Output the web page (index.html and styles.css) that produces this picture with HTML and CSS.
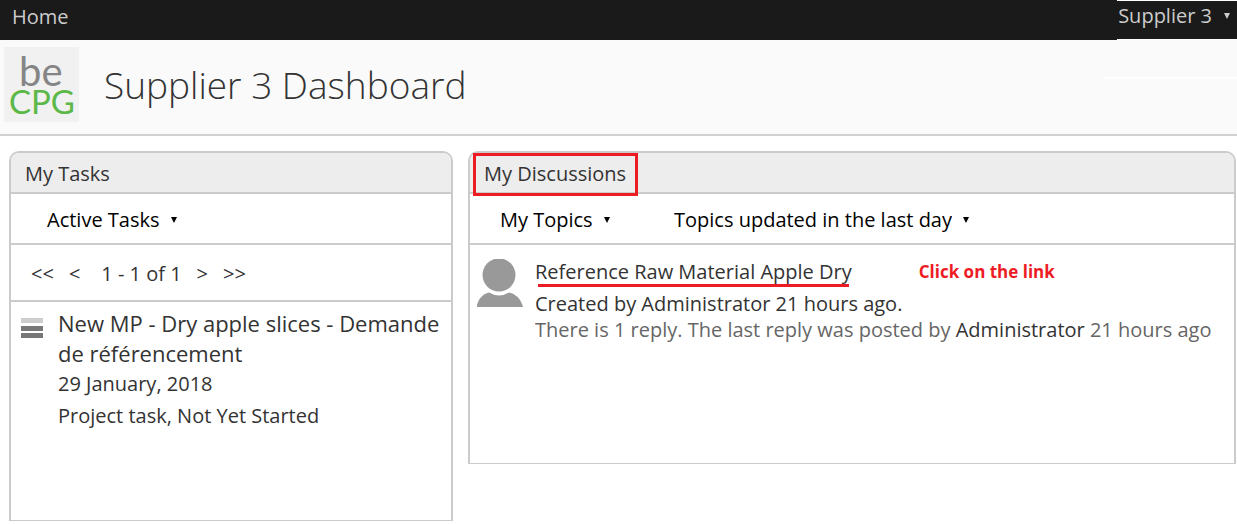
FILE: index.html
```html
<!DOCTYPE html>
<html lang="en">
<head>
    <meta charset="UTF-8">
    <meta name="viewport" content="width=device-width, initial-scale=1.0">
    <title>Supplier 3 Dashboard</title>
    <link rel="stylesheet" href="styles.css">
</head>
<body>
    <nav class="topbar">
        <a class="home" href="#">Home</a>
        <button class="user-menu" type="button" aria-haspopup="true">Supplier 3 <span class="arrow"></span></button>
    </nav>

    <header class="header">
        <svg class="logo" viewBox="0 0 75 75" role="img" aria-label="beCPG">
            <rect width="75" height="75" fill="#f1f1f1"/>
            <text><tspan class="logo-be" x="15" y="39">be</tspan><tspan class="logo-cpg" x="5" y="67">CPG</tspan></text>
        </svg>
        <h1>Supplier 3 Dashboard</h1>
        <div class="header-line"></div>
    </header>

    <main class="dashboard">
        <section class="panel tasks">
            <h2 class="panel-title"><span>My Tasks</span></h2>
            <div class="toolbar">
                <label class="filter">
                    <select aria-label="Task filter">
                        <option>Active Tasks</option>
                    </select>
                    <span class="arrow"></span>
                </label>
            </div>
            <div class="pager">
                <button type="button" aria-label="First page">&lt;&lt;</button>
                <button type="button" aria-label="Previous page">&lt;</button>
                <span class="pages">1 - 1 of 1</span>
                <button type="button" aria-label="Next page">&gt;</button>
                <button type="button" aria-label="Last page">&gt;&gt;</button>
            </div>
            <div class="task">
                <svg class="priority" viewBox="0 0 24 24" aria-hidden="true">
                    <rect x="1" y="1" width="22" height="5" fill="#cdcdcd"/>
                    <rect x="1" y="9" width="22" height="5" fill="#777"/>
                    <rect x="1" y="16" width="22" height="5" fill="#777"/>
                </svg>
                <div class="task-text">
                    <a class="task-name" href="#">New MP - Dry apple slices - Demande de référencement</a>
                    <div class="task-date">29 January, 2018</div>
                    <div class="task-status">Project task, Not Yet Started</div>
                </div>
            </div>
        </section>

        <section class="panel discussions">
            <h2 class="panel-title"><span class="marked">My Discussions</span></h2>
            <div class="toolbar">
                <label class="filter">
                    <select aria-label="Topics">
                        <option>My Topics</option>
                    </select>
                    <span class="arrow"></span>
                </label>
                <label class="filter">
                    <select aria-label="Period">
                        <option>Topics updated in the last day</option>
                    </select>
                    <span class="arrow"></span>
                </label>
            </div>
            <div class="topic">
                <svg class="avatar" viewBox="0 0 46 48" aria-hidden="true">
                    <circle cx="22" cy="16" r="16.500" fill="#999"/>
                    <path d="M0 48v-2C2 39 6 35 12 33.500q10 6 20 0C39 35 44 40 46 48z" fill="#999"/>
                </svg>
                <div class="topic-text">
                    <div class="topic-head">
                        <a class="topic-name" href="#">Reference Raw Material Apple Dry</a>
                        <strong class="note">Click on the link</strong>
                    </div>
                    <div class="created">Created by <a href="#">Administrator</a> 21 hours ago.</div>
                    <div class="replies">There is 1 reply. The last reply was posted by <a href="#">Administrator</a> 21 hours ago</div>
                </div>
            </div>
        </section>
    </main>
</body>
</html>
```
FILE: styles.css
```css
* {
    box-sizing: border-box;
}

body {
    margin: 0;
    background: #fff;
    color: #333;
    font-family: "Open Sans", sans-serif;
    font-size: 20px;
    line-height: 26px;
}

a {
    color: #333;
    text-decoration: none;
}

button,
select {
    margin: 0;
    padding: 0;
    border: 0;
    background: none;
    color: inherit;
    font: inherit;
    appearance: none;
    cursor: pointer;
}

.arrow {
    display: inline-block;
    width: 0;
    border: 3px solid transparent;
    border-top: 6px solid currentColor;
    border-bottom: 0;
}

.topbar {
    display: flex;
    justify-content: space-between;
    height: 40px;
    background: #1a1a1a;
}

.home {
    padding: 4px 12px;
    color: #ccc;
}

.user-menu {
    display: flex;
    align-items: center;
    gap: 12px;
    padding: 0 7px 8px 1px;
    border-top: 1px solid #fff;
    border-bottom: 1px solid #fff;
    color: #ccc;
}

.header {
    display: flex;
    align-items: center;
    height: 96px;
    padding: 0 0 5px 4px;
    border-bottom: 2px solid #d1d1d1;
    background: #fafafa;
}

.logo {
    width: 75px;
    height: 75px;
}

.logo text {
    font-family: Lato, sans-serif;
}

.logo-be {
    fill: #858585;
    font-size: 40px;
}

.logo-cpg {
    fill: #5cb848;
    font-size: 33px;
}

h1 {
    margin: 0 0 0 25px;
    font-size: 37px;
    font-weight: 300;
    line-height: 52px;
}

.header-line {
    width: 134px;
    height: 2px;
    margin: 0 0 14px auto;
    background: #fff;
}

.dashboard {
    display: grid;
    grid-template-columns: 444fr 768fr;
    align-items: start;
    gap: 15px;
    padding: 15px 1px 0 9px;
}

.panel {
    min-width: 0;
    border: 2px solid #cbcbcb;
    border-bottom-width: 1px;
    border-radius: 10px 10px 0 0;
}

.tasks {
    min-height: 370px;
}

.discussions {
    min-height: 313px;
}

.panel-title {
    display: flex;
    align-items: center;
    height: 41px;
    margin: 0;
    padding: 2px 0 0 14px;
    border-bottom: 2px solid #cbcbcb;
    border-radius: 8px 8px 0 0;
    background: #ededed;
    font-size: 20px;
    font-weight: 400;
}

.marked {
    margin: 2px -11px 0;
    padding: 5px 9px 6px 8px;
    border: 3px solid #ed1c24;
}

.toolbar {
    display: flex;
    align-items: center;
    gap: 64px;
    height: 51px;
    padding: 2px 0 0 36px;
    border-bottom: 2px solid #cbcbcb;
    color: #000;
}

.discussions .toolbar {
    padding-left: 30px;
}

.filter {
    display: flex;
    align-items: center;
    gap: 11px;
}

.pager {
    display: flex;
    align-items: center;
    gap: 15px;
    height: 57px;
    padding: 2px 0 0 20px;
    border-bottom: 2px solid #cbcbcb;
}

.pages {
    margin-left: 6px;
}

.task {
    display: flex;
    gap: 14px;
    padding: 6px 10px 10px 9px;
}

.priority {
    flex: none;
    width: 24px;
    height: 24px;
    margin-top: 9px;
}

.task-name {
    display: block;
    font-size: 22px;
    line-height: 30px;
}

.task-date,
.task-status {
    line-height: 32px;
}

.topic {
    display: flex;
    gap: 12px;
    padding: 14px 14px 10px 7px;
}

.avatar {
    flex: none;
    width: 46px;
    height: 48px;
}

.topic-text {
    min-width: 0;
}

.topic-head {
    display: flex;
    gap: 67px;
    margin-bottom: 6px;
}

.topic-name {
    padding-bottom: 2px;
    margin-bottom: -2px;
    background: linear-gradient(#ed1c24, #ed1c24) 3px 100% / calc(100% - 6px) 3px no-repeat;
}

.note {
    color: #ed1c24;
    font-size: 17px;
}

.replies {
    overflow: hidden;
    color: #666;
    white-space: nowrap;
}
```
